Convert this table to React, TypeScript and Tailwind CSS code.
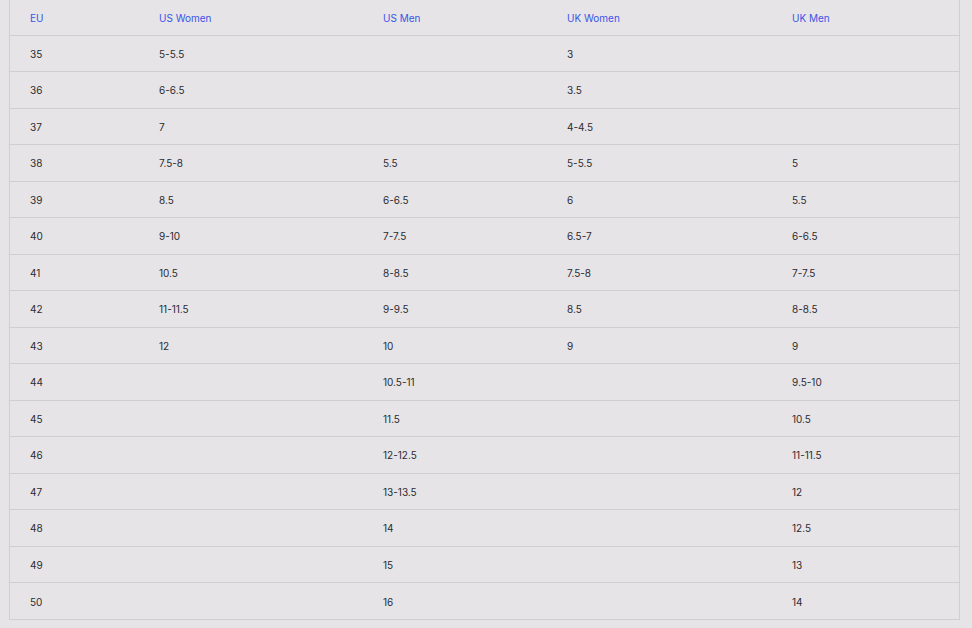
const rows: [string, string, string, string, string][] = [
  ['35', '5-5.5', '', '3', ''],
  ['36', '6-6.5', '', '3.5', ''],
  ['37', '7', '', '4-4.5', ''],
  ['38', '7.5-8', '5.5', '5-5.5', '5'],
  ['39', '8.5', '6-6.5', '6', '5.5'],
  ['40', '9-10', '7-7.5', '6.5-7', '6-6.5'],
  ['41', '10.5', '8-8.5', '7.5-8', '7-7.5'],
  ['42', '11-11.5', '9-9.5', '8.5', '8-8.5'],
  ['43', '12', '10', '9', '9'],
  ['44', '', '10.5-11', '', '9.5-10'],
  ['45', '', '11.5', '', '10.5'],
  ['46', '', '12-12.5', '', '11-11.5'],
  ['47', '', '13-13.5', '', '12'],
  ['48', '', '14', '', '12.5'],
  ['49', '', '15', '', '13'],
  ['50', '', '16', '', '14'],
]

const heads = ['EU', 'US Women', 'US Men', 'UK Women', 'UK Men']
const widths = ['w-[129px]', 'w-[224px]', 'w-[184px]', 'w-[225px]', 'w-auto']

export default function App() {
  return (
    <div className="h-[628px] w-[972px] overflow-hidden bg-[#e6e4e7] font-['Inter','Liberation_Sans',sans-serif]">
      <div className="ml-[9px] mt-[-1px] w-[951px] border border-[#d0ced1]">
        <table className="w-full table-fixed border-collapse text-[10px]">
          <thead>
            <tr className="h-[35px] border-b border-[#d0ced1]">
              {heads.map((h, i) => (
                <th
                  key={h}
                  className={`${widths[i]} pl-[20px] pt-[3px] text-left font-normal text-[#3b55e6]`}
                >
                  {h}
                </th>
              ))}
            </tr>
          </thead>
          <tbody>
            {rows.map((r, ri) => (
              <tr
                key={r[0]}
                className={`h-[36.5px] ${ri < rows.length - 1 ? 'border-b border-[#d0ced1]' : ''}`}
              >
                {r.map((c, i) => (
                  <td key={i} className="pl-[20px] pt-[2px] text-[#2b2b30]">
                    {c}
                  </td>
                ))}
              </tr>
            ))}
          </tbody>
        </table>
      </div>
    </div>
  )
}
